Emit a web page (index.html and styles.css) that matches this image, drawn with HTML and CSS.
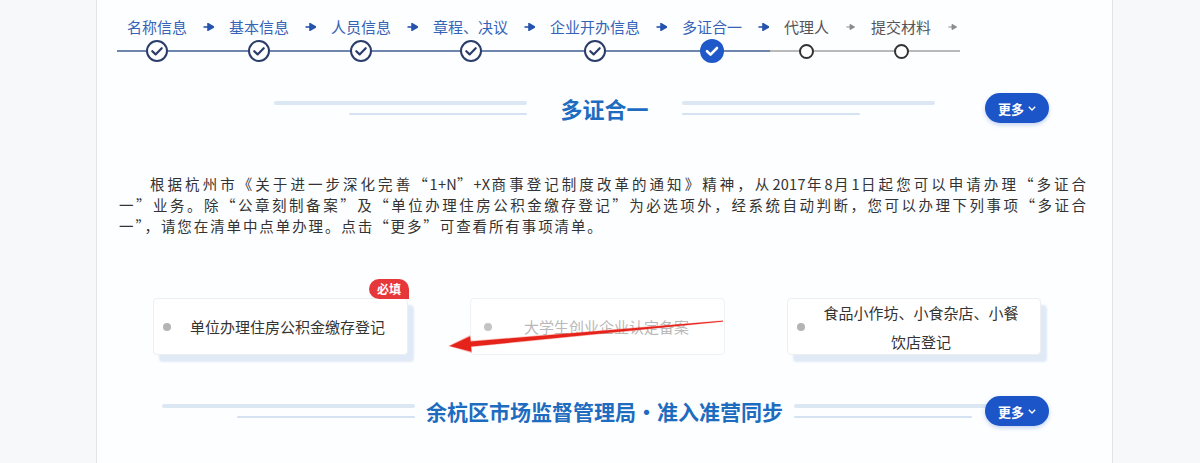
FILE: index.html
```html
<!DOCTYPE html>
<html lang="zh-CN">

<head>
    <meta charset="UTF-8">
    <meta name="viewport" content="width=device-width, initial-scale=1.0">
    <title>多证合一</title>
    <link rel="stylesheet" href="styles.css">
</head>

<body>
    <div class="panel">
        <!-- 步骤条 -->
        <div class="steps">
            <div class="step done">
                <div class="step-label">名称信息</div>
                <div class="step-dot"><span class="circle"><svg viewBox="0 0 22 22"><path d="M6.3 11.2 L9.6 14.4 L15.7 8.2"/></svg></span></div>
            </div>
            <div class="step-arrow done"><svg viewBox="0 0 11 8"><path d="M0.5 4 H6"/><polygon points="5,0.8 10.5,4 5,7.2"/></svg></div>
            <div class="step done">
                <div class="step-label">基本信息</div>
                <div class="step-dot"><span class="circle"><svg viewBox="0 0 22 22"><path d="M6.3 11.2 L9.6 14.4 L15.7 8.2"/></svg></span></div>
            </div>
            <div class="step-arrow done"><svg viewBox="0 0 11 8"><path d="M0.5 4 H6"/><polygon points="5,0.8 10.5,4 5,7.2"/></svg></div>
            <div class="step done">
                <div class="step-label">人员信息</div>
                <div class="step-dot"><span class="circle"><svg viewBox="0 0 22 22"><path d="M6.3 11.2 L9.6 14.4 L15.7 8.2"/></svg></span></div>
            </div>
            <div class="step-arrow done"><svg viewBox="0 0 11 8"><path d="M0.5 4 H6"/><polygon points="5,0.8 10.5,4 5,7.2"/></svg></div>
            <div class="step done">
                <div class="step-label">章程、决议</div>
                <div class="step-dot"><span class="circle"><svg viewBox="0 0 22 22"><path d="M6.3 11.2 L9.6 14.4 L15.7 8.2"/></svg></span></div>
            </div>
            <div class="step-arrow done"><svg viewBox="0 0 11 8"><path d="M0.5 4 H6"/><polygon points="5,0.8 10.5,4 5,7.2"/></svg></div>
            <div class="step done">
                <div class="step-label">企业开办信息</div>
                <div class="step-dot"><span class="circle"><svg viewBox="0 0 22 22"><path d="M6.3 11.2 L9.6 14.4 L15.7 8.2"/></svg></span></div>
            </div>
            <div class="step-arrow done"><svg viewBox="0 0 11 8"><path d="M0.5 4 H6"/><polygon points="5,0.8 10.5,4 5,7.2"/></svg></div>
            <div class="step active">
                <div class="step-label">多证合一</div>
                <div class="step-dot"><span class="circle"><svg viewBox="0 0 24 24"><path d="M7 12.2 L10.5 15.6 L17 9"/></svg></span></div>
            </div>
            <div class="step-arrow done"><svg viewBox="0 0 11 8"><path d="M0.5 4 H6"/><polygon points="5,0.8 10.5,4 5,7.2"/></svg></div>
            <div class="step todo">
                <div class="step-label">代理人</div>
                <div class="step-dot"><span class="circle"></span></div>
            </div>
            <div class="step-arrow todo"><svg viewBox="0 0 11 8"><path d="M0.5 4 H6"/><polygon points="5,0.8 10.5,4 5,7.2"/></svg></div>
            <div class="step todo">
                <div class="step-label">提交材料</div>
                <div class="step-dot"><span class="circle"></span></div>
            </div>
            <div class="step-arrow todo"><svg viewBox="0 0 11 8"><path d="M0.5 4 H6"/><polygon points="5,0.8 10.5,4 5,7.2"/></svg></div>
        </div>

        <!-- 多证合一 -->
        <div class="section-head head1">
            <div class="deco deco-left"><span class="bar-top"></span><span class="bar-bottom"></span></div>
            <h2 class="section-title">多证合一</h2>
            <div class="deco deco-right"><span class="bar-top"></span><span class="bar-bottom"></span></div>
            <a class="more-btn">更多<svg viewBox="0 0 8 5"><path d="M0.8 0.8 L4 4 L7.2 0.8"/></svg></a>
        </div>

        <p class="intro">
            <span class="line first">根据杭州市《关于进一步深化完善“<span class="num">1+N</span>”<span class="num">+X</span>商事登记制度改革的通知》精神，从<span class="num">2017</span>年<span class="num">8</span>月<span class="num">1</span>日起您可以申请办理“多证合</span>
            <span class="line">一”业务。除“公章刻制备案”及“单位办理住房公积金缴存登记”为必选项外，经系统自动判断，您可以办理下列事项“多证合</span>
            <span class="line last">一”，请您在清单中点单办理。点击“更多”可查看所有事项清单。</span>
        </p>

        <div class="cards">
            <div class="card shadow">
                <span class="badge">必填</span>
                <i class="dot"></i>
                <span class="card-text">单位办理住房公积金缴存登记</span>
            </div>
            <div class="card faded">
                <i class="dot"></i>
                <span class="card-text">大学生创业企业认定备案</span>
            </div>
            <div class="card shadow">
                <i class="dot"></i>
                <span class="card-text">食品小作坊、小食杂店、小餐<br>饮店登记</span>
            </div>
            <!-- 标注箭头 -->
            <svg class="mark-arrow" viewBox="0 0 886 70">
                <polygon class="glow" points="570,22.2 317.7,42.8 317,37 295,48 318.8,55 318.2,49.2 570,24.1"/>
                <polygon points="570,22.7 317.7,43.5 317.2,38.2 296.5,48 318.6,53.8 318.1,48.5 570,23.6"/>
            </svg>
        </div>

        <!-- 余杭区 -->
        <div class="section-head head2">
            <div class="deco deco-left"><span class="bar-top"></span><span class="bar-bottom"></span></div>
            <h2 class="section-title">余杭区市场监督管理局·准入准营同步</h2>
            <div class="deco deco-right"><span class="bar-top"></span><span class="bar-bottom"></span></div>
            <a class="more-btn">更多<svg viewBox="0 0 8 5"><path d="M0.8 0.8 L4 4 L7.2 0.8"/></svg></a>
        </div>
    </div>
</body>

</html>
```

FILE: styles.css
```css
* {
    margin: 0;
    padding: 0;
    box-sizing: border-box;
}

body {
    background-color: #f7f8fa;
    font-family: "Noto Sans CJK SC", "Noto Sans", sans-serif;
    color: #333;
}

.panel {
    width: 1017px;
    min-height: 463px;
    margin-left: 96px;
    background-color: #fdfeff;
    border-left: 1px solid #e2e4e8;
    border-right: 1px solid #e2e4e8;
    overflow: hidden;
}

/* 步骤条 */
.steps {
    position: relative;
    display: flex;
    padding-top: 17px;
    padding-left: 30px;
}

.steps::before {
    /* 底线 */
    content: "";
    position: absolute;
    left: 20px;
    top: 50px;
    width: 843px;
    height: 2px;
    background: linear-gradient(to right, #6e86ad 0, #6e86ad 653px, #b9b9b9 653px);
}

.step {
    display: flex;
    flex-direction: column;
    align-items: center;
}

.step-label {
    height: 20px;
    line-height: 20px;
    font-size: 15px;
    white-space: nowrap;
    color: #3564b6;
}

.step.todo .step-label {
    color: #555;
}

.step-dot {
    position: relative;
    height: 22px;
    margin-top: 3px;
    display: flex;
    align-items: center;
    justify-content: center;
}

.circle {
    display: block;
    width: 22px;
    height: 22px;
    border-radius: 50%;
    border: 2px solid #2a3d6b;
    background-color: #fff;
}

.circle svg {
    display: block;
    margin: -2px;
    width: 22px;
    height: 22px;
    fill: none;
    stroke: #2a3d6b;
    stroke-width: 2.2;
    stroke-linecap: round;
    stroke-linejoin: round;
}

.step.active .circle {
    width: 24px;
    height: 24px;
    border: none;
    background-color: #1f58c8;
}

.step.active .circle svg {
    margin: 0;
    width: 24px;
    height: 24px;
    stroke: #fff;
    stroke-width: 2.6;
}

.step.todo .circle {
    width: 15px;
    height: 15px;
    border-color: #333;
}

.step-arrow {
    width: 42px;
    height: 20px;
    display: flex;
    align-items: center;
    justify-content: center;
}

.step-arrow svg {
    width: 11px;
    height: 8px;
    fill: #2553ad;
    stroke: #2553ad;
    stroke-width: 1.6;
}

.step-arrow.todo svg {
    fill: #8a8a8a;
    stroke: #8a8a8a;
    width: 9px;
    stroke-width: 1.2;
}

/* 标题 */
.section-head {
    position: relative;
    display: flex;
    align-items: center;
    justify-content: center;
    height: 30px;
}

.head1 {
    margin-top: 31px;
}

.head2 {
    margin-top: 41px;
}

.deco {
    width: 253px;
    height: 16px;
    display: flex;
    flex-direction: column;
    justify-content: space-between;
    padding: 1px 0;
}

.deco-left {
    align-items: flex-end;
}

.deco-right {
    align-items: flex-start;
}

.bar-top {
    display: block;
    width: 253px;
    height: 4px;
    border-radius: 2px;
    background-color: #dce7f4;
}

.bar-bottom {
    display: block;
    width: 178px;
    height: 2px;
    border-radius: 1px;
    background-color: #d4e2f1;
}

.section-title {
    font-size: 22px;
    font-weight: 700;
    color: #1e6cbf;
    line-height: 30px;
    white-space: nowrap;
}

.head1 .section-title {
    margin: 0 33px;
}

.head2 .section-title {
    font-size: 21px;
    margin: 0 11px;
}

.more-btn {
    position: absolute;
    right: 63px;
    top: 0;
    width: 64px;
    height: 30px;
    border-radius: 15px;
    background-color: #1c55c8;
    box-shadow: 0 2px 4px rgba(28, 85, 200, 0.25);
    color: #fff;
    font-size: 13px;
    font-weight: 700;
    display: flex;
    align-items: center;
    justify-content: center;
    gap: 4px;
}

.more-btn svg {
    width: 8px;
    height: 5px;
    fill: none;
    stroke: #fff;
    stroke-width: 1.3;
}

/* 说明文字 */
.intro {
    margin: 50px 24px 0 22px;
    font-size: 14.5px;
    line-height: 21px;
    letter-spacing: 1.9px;
    color: #333;
}

.intro .num {
    letter-spacing: 0.3px;
}

.intro .line {
    display: block;
    white-space: nowrap;
    text-align: justify;
    text-align-last: justify;
}

.intro .line.first {
    padding-left: 31px;
}

.intro .line.last {
    text-align-last: left;
}

/* 事项卡片 */
.cards {
    position: relative;
    display: grid;
    grid-template-columns: 255px 255px 254px;
    column-gap: 62px;
    margin-top: 62px;
    margin-left: 56px;
}

.card {
    position: relative;
    height: 57px;
    display: flex;
    align-items: center;
    padding: 0 9px 0 9px;
    background-color: #fff;
    border: 1px solid #eceef2;
    border-radius: 4px;
}

.card.shadow {
    box-shadow: 6px 7px 2px #e0eaf6;
}

.dot {
    display: block;
    width: 8px;
    height: 8px;
    border-radius: 50%;
    background-color: #b4b4b4;
    flex-shrink: 0;
}

.card-text {
    flex: 1;
    text-align: center;
    font-size: 15px;
    line-height: 29px;
    color: #333;
    padding-left: 6px;
}

.card.faded {
    border-color: #f0f1f3;
}

.card.faded .dot {
    background-color: #c4c4c4;
    margin-left: 4px;
}

.card.faded .card-text {
    color: #b9b9b9;
}

.badge {
    position: absolute;
    right: -2px;
    top: -20px;
    width: 40px;
    height: 20px;
    line-height: 20px;
    text-align: center;
    font-size: 12px;
    font-weight: 700;
    color: #fff;
    background-color: #e6383a;
    border-radius: 10px 10px 0 10px;
}

.mark-arrow {
    position: absolute;
    left: 0;
    top: 0;
    width: 886px;
    height: 70px;
    overflow: visible;
    pointer-events: none;
}

.mark-arrow polygon {
    fill: #e5231b;
}

.mark-arrow .glow {
    fill: rgba(240, 60, 50, 0.35);
}
```
